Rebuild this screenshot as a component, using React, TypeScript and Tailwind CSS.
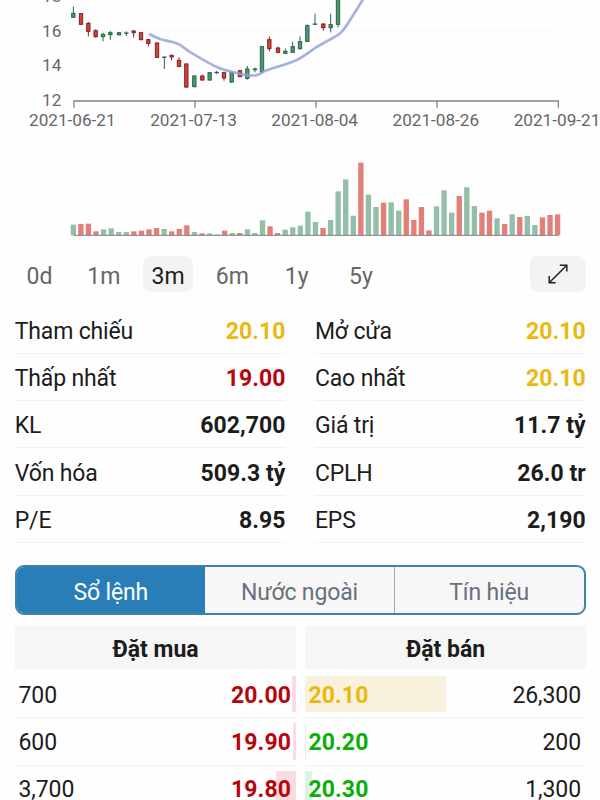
import type { FC } from 'react'
import clsx from 'clsx'

type Dir = 'g' | 'r'

// x, direction, body top, body bottom, wick top, wick bottom
type Candle = [number, Dir, number, number, number, number]

const CANDLES: Candle[] = [
  [220, 'g', 40, 52, 20, 52],
  [243, 'r', 41, 73, 40, 74],
  [265, 'r', 70, 94, 66, 109],
  [287, 'r', 92, 110, 88, 113],
  [309, 'g', 103, 110, 98, 124],
  [331, 'g', 98, 104, 93, 119],
  [357, 'g', 98, 104, 98, 107],
  [379, 'g', 99, 100, 94, 108],
  [401, 'r', 93, 98, 90, 113],
  [423, 'r', 98, 119, 96, 121],
  [445, 'r', 119, 130, 117, 139],
  [471, 'r', 129, 172, 127, 174],
  [493, 'g', 171, 172, 170, 207],
  [515, 'r', 166, 171, 164, 181],
  [537, 'r', 181, 199, 172, 202],
  [559, 'r', 192, 261, 189, 264],
  [583, 'g', 228, 260, 225, 262],
  [607, 'r', 228, 240, 224, 242],
  [629, 'g', 218, 240, 216, 243],
  [650, 'g', 217, 218, 213, 222],
  [672, 'r', 218, 234, 215, 242],
  [695, 'g', 218, 246, 215, 249],
  [720, 'r', 212, 230, 211, 231],
  [742, 'g', 207, 235, 198, 239],
  [765, 'g', 207, 209, 203, 217],
  [786, 'g', 140, 215, 139, 222],
  [808, 'r', 119, 146, 109, 154],
  [834, 'r', 144, 157, 140, 160],
  [856, 'g', 154, 160, 146, 162],
  [878, 'g', 140, 157, 125, 159],
  [900, 'g', 125, 146, 109, 148],
  [922, 'g', 77, 124, 73, 126],
  [945, 'g', 72, 73, 41, 75],
  [970, 'r', 72, 83, 70, 92],
  [992, 'g', 74, 83, 41, 97],
  [1014, 'g', -20, 73, -20, 82],
]

const VOLUMES: [Dir, number][] = [
  ['g', 32], ['r', 34], ['r', 35], ['r', 12], ['g', 18], ['g', 21], ['g', 10], ['g', 10],
  ['r', 12], ['r', 14], ['r', 18], ['r', 22], ['g', 19], ['r', 12], ['r', 19], ['r', 30],
  ['g', 10], ['r', 6], ['g', 6], ['g', 3], ['r', 14], ['g', 7], ['r', 7], ['g', 18],
  ['g', 7], ['g', 45], ['r', 27], ['r', 7], ['g', 17], ['g', 24], ['g', 29], ['g', 71],
  ['g', 40], ['r', 22], ['g', 46], ['g', 132], ['g', 168], ['g', 59], ['r', 218], ['g', 122],
  ['g', 85], ['r', 98], ['g', 99], ['g', 74], ['r', 108], ['r', 46], ['r', 85], ['r', 15],
  ['g', 87], ['g', 135], ['g', 68], ['r', 118], ['g', 144], ['g', 88], ['r', 68], ['r', 74],
  ['g', 51], ['r', 34], ['g', 63], ['r', 55], ['g', 58], ['g', 31], ['r', 54], ['r', 61],
  ['r', 63],
]

const DATES = ['2021-06-21', '2021-07-13', '2021-08-04', '2021-08-26', '2021-09-21']
const PRICES = ['18', '16', '14', '12']
const RANGES = ['0d', '1m', '3m', '6m', '1y', '5y']

const COLORS = {
  yellow: 'text-[#e9b90f]',
  red: 'text-[#b5060e]',
  green: 'text-[#0aae0a]',
  black: 'text-[#1c1c1c]',
}

type Color = keyof typeof COLORS

const STATS: { label: string; value: string; color: Color }[] = [
  { label: 'Tham chiếu', value: '20.10', color: 'yellow' },
  { label: 'Mở cửa', value: '20.10', color: 'yellow' },
  { label: 'Thấp nhất', value: '19.00', color: 'red' },
  { label: 'Cao nhất', value: '20.10', color: 'yellow' },
  { label: 'KL', value: '602,700', color: 'black' },
  { label: 'Giá trị', value: '11.7 tỷ', color: 'black' },
  { label: 'Vốn hóa', value: '509.3 tỷ', color: 'black' },
  { label: 'CPLH', value: '26.0 tr', color: 'black' },
  { label: 'P/E', value: '8.95', color: 'black' },
  { label: 'EPS', value: '2,190', color: 'black' },
]

interface Order {
  price: string
  volume: string
  color: Color
  bar: string
  width: number
}

const BIDS: Order[] = [
  { price: '20.00', volume: '700', color: 'red', bar: 'bg-[#fbdde0]', width: 4 },
  { price: '19.90', volume: '600', color: 'red', bar: 'bg-[#fbdde0]', width: 3 },
  { price: '19.80', volume: '3,700', color: 'red', bar: 'bg-[#fbdde0]', width: 20 },
]

const ASKS: Order[] = [
  { price: '20.10', volume: '26,300', color: 'yellow', bar: 'bg-[#f8f2dc]', width: 140.5 },
  { price: '20.20', volume: '200', color: 'green', bar: 'bg-[#dcf3e0]', width: 1 },
  { price: '20.30', volume: '1,300', color: 'green', bar: 'bg-[#dcf3e0]', width: 7 },
]

// Both charts are drawn on a 3x grid
const PriceChart: FC = () => (
  <svg className="block h-[150px] w-[600px]" viewBox="0 0 1800 450">
    {[93, 198].map((y) => (
      <line key={y} x1="221" x2="1675" y1={y} y2={y} stroke="#f8f8f8" strokeWidth="3" />
    ))}
    {CANDLES.map(([x, dir, top, bottom, high, low]) => (
      <g key={x} stroke={dir === 'g' ? '#2b6448' : '#7c2424'} strokeWidth="3">
        <line x1={x} x2={x} y1={high} y2={low} />
        <rect
          x={x - 5}
          y={top}
          width="10"
          height={bottom - top}
          fill={dir === 'g' ? '#4c9a6f' : '#d8412f'}
        />
      </g>
    ))}
    <path
      d="M448 102 Q463 111 480 117 C500 123 515 124 533 131 C548 138 558 149 573 158 C600 175 630 191 652 202 C672 211 690 214 712 220 C730 224 752 228 768 226 C781 223 786 215 800 211 C832 199 860 194 890 180 C915 168 930 154 950 141 L1000 113 Q1021 102 1032 87 C1048 65 1062 42 1088 0 L1098 -18"
      fill="none"
      stroke="#8f9fd9"
      strokeOpacity="0.8"
      strokeWidth="8"
    />
    <path
      d="M222 323 V303 H1675 V323 M585 303 V323 M948 303 V323 M1311 303 V323"
      fill="none"
      stroke="#858585"
      strokeWidth="4"
    />
    <g fill="#666666" fontSize="51.5">
      {PRICES.map((price, i) => (
        <text key={price} x="184" y={6 + i * 104} textAnchor="end">
          {price}
        </text>
      ))}
      {DATES.map((date, i) => (
        <text key={date} x={217 + i * 363.5} y="378" textAnchor="middle">
          {date}
        </text>
      ))}
    </g>
  </svg>
)

const VolumeChart: FC = () => (
  <svg className="block h-[90px] w-[600px]" viewBox="0 0 1800 270">
    {VOLUMES.map(([dir, height], i) => (
      <rect
        key={i}
        x={212 + i * 22.7}
        y={256 - height}
        width="16"
        height={height}
        fill={dir === 'g' ? '#93bfa8' : '#e37f79'}
      />
    ))}
    <line x1="221" x2="1675" y1="256" y2="256" stroke="#808080" strokeWidth="3" />
  </svg>
)

const OrderColumn: FC<{ title: string; orders: Order[]; side: 'buy' | 'sell' }> = ({
  title,
  orders,
  side,
}) => (
  <div className="flex-1">
    <h3 className="mb-[2px] h-[43px] bg-[#f6f6f6] text-center font-bold leading-[48px]">{title}</h3>
    {orders.map((order) => (
      <div
        key={order.price}
        className="grid h-[47.3px] border-b-[1.5px] border-[#f2f2f2] py-[5px]"
      >
        <div
          className={clsx(
            'col-start-1 row-start-1',
            order.bar,
            side === 'buy' ? 'justify-self-end' : 'justify-self-start',
          )}
          style={{ width: order.width }}
        />
        <div
          className={clsx(
            'z-10 col-start-1 row-start-1 flex items-center justify-between pl-[3.5px] pr-[5px] pt-[2px]',
            side === 'sell' && 'flex-row-reverse',
          )}
        >
          <span className="tracking-[-0.1px]">{order.volume}</span>
          <span className={clsx('font-bold tracking-[0.1px]', COLORS[order.color])}>
            {order.price}
          </span>
        </div>
      </div>
    ))}
  </div>
)

export default function App() {
  return (
    <div className="h-[800px] w-[600px] overflow-hidden bg-[#fefefe] font-[Roboto,'Liberation_Sans',sans-serif] text-[23px] leading-none text-[#1c1c1c]">
      <PriceChart />
      <VolumeChart />

      <div className="mt-4 flex h-9 pl-[14.5px] pr-[14px]">
        <div className="flex gap-[14.3px]">
          {RANGES.map((range) => (
            <button
              key={range}
              className={clsx(
                'flex w-[50px] items-center justify-center rounded-lg pt-[5px]',
                range === '3m' ? 'bg-[#f3f3f3] text-[#1c1c1c]' : 'text-[#666]',
              )}
            >
              {range}
            </button>
          ))}
        </div>
        <button className="ml-auto flex w-14 items-center justify-center rounded-lg bg-[#f3f3f3]">
          <svg className="size-5" viewBox="0 0 20 20" fill="none" stroke="#222" strokeWidth="1.5">
            <path d="M1.2 18.8 18.8 1.2M11.8 1.2h7v6.2M1.2 12v6.8h6.5" />
          </svg>
        </button>
      </div>

      <div className="mt-[14.6px] grid grid-cols-2 gap-x-[29.5px] pl-[14.7px] pr-[14.3px]">
        {STATS.map((stat) => (
          <div
            key={stat.label}
            className="flex h-[47.3px] items-center justify-between border-b-[1.5px] border-[#f1f1f1] pt-[3px]"
          >
            <span className="tracking-[-0.15px]">{stat.label}</span>
            <span className={clsx('font-bold tracking-[0.05px]', COLORS[stat.color])}>
              {stat.value}
            </span>
          </div>
        ))}
      </div>

      <div className="ml-[14.5px] mr-[14.5px] mt-[21.9px] flex h-[50px] overflow-hidden rounded-[9px] border-2 border-[#3f83a8] bg-[#f7f7f8] tracking-[-0.15px] text-[#68717a]">
        <div className="flex flex-1 items-center justify-center bg-[#287fb8] pt-[5px] text-white">
          Sổ lệnh
        </div>
        <div className="flex flex-1 items-center justify-center border-r border-[#a3b1bf] pt-[5px]">
          Nước ngoài
        </div>
        <div className="flex flex-1 items-center justify-center pt-[5px]">Tín hiệu</div>
      </div>

      <div className="ml-[15px] mr-[14px] mt-[11px] flex gap-[9px]">
        <OrderColumn title="Đặt mua" orders={BIDS} side="buy" />
        <OrderColumn title="Đặt bán" orders={ASKS} side="sell" />
      </div>
    </div>
  )
}
